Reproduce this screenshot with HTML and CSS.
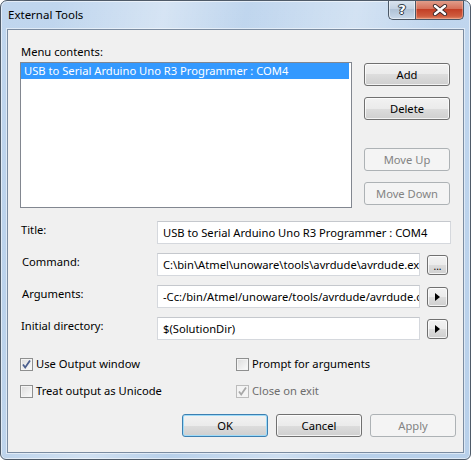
FILE: index.html
```html
<!DOCTYPE html>
<html>
<head>
<meta charset="utf-8">
<link rel="stylesheet" href="styles.css">
</head>
<body>
<div class="window">
  <div class="titlebar">
    <span class="title">External Tools</span>
    <div class="caption-btns">
      <div class="cap help"><span class="qmark">?</span></div>
      <div class="cap close">
        <svg width="16" height="12" viewBox="0 0 16 12">
          <path d="M3 2 L13 10 M13 2 L3 10" stroke="#3d2a2a" stroke-width="4.2" stroke-linecap="round"/>
          <path d="M3 2 L13 10 M13 2 L3 10" stroke="#fff" stroke-width="2.4" stroke-linecap="round"/>
        </svg>
      </div>
    </div>
  </div>
  <div class="client">
    <div class="top">
      <div class="list-col">
        <div class="label">Menu contents:</div>
        <div class="listbox">
          <div class="item sel">USB to Serial Arduino Uno R3 Programmer : COM4</div>
        </div>
      </div>
      <div class="side-btns">
        <div class="btn">Add</div>
        <div class="btn">Delete</div>
        <div class="btn disabled gap">Move Up</div>
        <div class="btn disabled">Move Down</div>
      </div>
    </div>
    <div class="form">
      <div class="row">
        <div class="flabel">Title:</div>
        <div class="field wide">USB to Serial Arduino Uno R3 Programmer : COM4</div>
      </div>
      <div class="row">
        <div class="flabel l2">Command:</div>
        <div class="field">C:\bin\Atmel\unoware\tools\avrdude\avrdude.exe</div>
        <div class="btn small"><span class="dots">...</span></div>
      </div>
      <div class="row">
        <div class="flabel l2">Arguments:</div>
        <div class="field">-Cc:/bin/Atmel/unoware/tools/avrdude/avrdude.conf</div>
        <div class="btn small"><svg width="5" height="8" viewBox="0 0 5 8"><path d="M0 0 L5 4 L0 8 Z" fill="#000"/></svg></div>
      </div>
      <div class="row">
        <div class="flabel">Initial directory:</div>
        <div class="field">$(SolutionDir)</div>
        <div class="btn small"><svg width="5" height="8" viewBox="0 0 5 8"><path d="M0 0 L5 4 L0 8 Z" fill="#000"/></svg></div>
      </div>
    </div>
    <div class="checks">
      <label class="chk"><span class="box"><svg width="11" height="11" viewBox="0 0 11 11"><path d="M2 5.5 L4.2 8.5 L9 1.5" fill="none" stroke="#4b5f8e" stroke-width="1.8"/></svg></span>Use Output window</label>
      <label class="chk"><span class="box"></span>Prompt for arguments</label>
      <label class="chk"><span class="box"></span>Treat output as Unicode</label>
      <label class="chk dis"><span class="box"><svg width="11" height="11" viewBox="0 0 11 11"><path d="M2 5.5 L4.2 8.5 L9 1.5" fill="none" stroke="#a8a8a8" stroke-width="1.8"/></svg></span>Close on exit</label>
    </div>
    <div class="actions">
      <div class="btn default">OK</div>
      <div class="btn">Cancel</div>
      <div class="btn disabled">Apply</div>
    </div>
  </div>
</div>
</body>
</html>
```

FILE: styles.css
```css
* { box-sizing: border-box; }
html, body { margin: 0; padding: 0; background: #fff; }
body {
  font-family: "Noto Sans", "Open Sans", sans-serif;
  font-size: 11.2px;
  color: #000;
}
.window {
  width: 471px;
  height: 460px;
  border: 1px solid #4f5b69;
  border-radius: 7px 7px 6px 6px;
  background:
    linear-gradient(100deg, rgba(255,255,255,0) 10%, rgba(255,255,255,0.35) 30%, rgba(255,255,255,0) 45%, rgba(255,255,255,0.3) 65%, rgba(255,255,255,0) 80%),
    linear-gradient(#c0d6ee, #b8d0ea);
  box-shadow: inset 0 0 0 1px rgba(255,255,255,0.55);
  display: flex;
  flex-direction: column;
  overflow: hidden;
}
.titlebar {
  height: 28px;
  display: flex;
  justify-content: space-between;
  align-items: flex-start;
  padding: 0 6px 0 7px;
  flex: none;
}
.title {
  margin-top: 6px;
  font-size: 11.5px;
  line-height: 16px;
  color: #000;
}
.caption-btns {
  display: flex;
  margin-top: -1px;
}
.cap {
  height: 20px;
  border: 1px solid #4a5766;
  border-top: none;
  display: flex;
  align-items: center;
  justify-content: center;
}
.help {
  width: 27px;
  border-right: none;
  border-radius: 0 0 0 5px;
  background: linear-gradient(#dbe5ef, #c3d2e2 45%, #b0c2d6 50%, #c9d9ea);
  box-shadow: inset 0 0 0 1px rgba(255,255,255,0.5);
}
.qmark {
  font-family: "DejaVu Sans", sans-serif;
  font-weight: bold;
  font-size: 13px;
  line-height: 13px;
  color: #fff;
  text-shadow: 0 0 1px #34414f, 0 0 1px #34414f, 0 0 1px #34414f, 1px 0 0 #34414f, -1px 0 0 #34414f, 0 1px 0 #34414f, 0 -1px 0 #34414f;
}
.close {
  width: 49px;
  border-radius: 0 0 5px 0;
  background: linear-gradient(#e2a391, #d6715a 45%, #c33f26 50%, #cf5c3e 85%, #e08a6a);
  box-shadow: inset 0 0 0 1px rgba(255,200,180,0.45);
}
.client {
  margin: 0 6px 6px 6px;
  flex: 1;
  background: #f0f0f0;
  border: 1px solid #7b8ca1;
  box-shadow: 0 0 0 1px rgba(255,255,255,0.5);
  padding: 14px 7px 0 12px;
  display: flex;
  flex-direction: column;
}
.top {
  display: flex;
  align-items: flex-start;
}
.label {
  line-height: 16px;
  padding-left: 1px;
}
.listbox {
  margin-top: 2px;
  width: 332px;
  height: 146px;
  border: 1px solid #828790;
  background: #fff;
  padding-top: 0;
}
.item {
  height: 16px;
  line-height: 16px;
  padding-left: 3px;
  margin-right: 2px;
  white-space: nowrap;
}
.item.sel {
  background: #3399ff;
  color: #fff;
}
.side-btns {
  margin-left: 12px;
  margin-top: 19px;
  display: flex;
  flex-direction: column;
  gap: 11px;
}
.side-btns .gap { margin-top: 17px; }
.btn {
  width: 86px;
  height: 23px;
  border: 1px solid #707070;
  border-radius: 3px;
  background: linear-gradient(#f2f2f2 0%, #ebebeb 50%, #dddddd 50%, #cfcfcf 100%);
  box-shadow: inset 0 0 0 1px rgba(255,255,255,0.75);
  display: flex;
  align-items: center;
  justify-content: center;
  line-height: 16px;
  color: #000;
}
.btn.disabled {
  border-color: #adb2b5;
  background: #f4f4f4;
  box-shadow: none;
  color: #838383;
}
.btn.default {
  border-color: #3c7fb1;
  box-shadow: inset 0 0 0 1px #9fdbf8;
}
.btn.small {
  width: 21px;
  height: 20px;
  margin-left: 7px;
  margin-top: 2px;
}
.dots {
  font-size: 10px;
  line-height: 10px;
  margin-top: 2px;
}
.form {
  margin-top: 13px;
  display: flex;
  flex-direction: column;
  gap: 9px;
}
.row {
  display: flex;
  align-items: flex-start;
  height: 23px;
}
.flabel {
  width: 137px;
  padding-left: 1px;
  padding-top: 1px;
  line-height: 16px;
}
.flabel.l2 { padding-left: 2px; }
.field {
  width: 263px;
  height: 23px;
  background: #fff;
  border: 1px solid #d5d8dd;
  border-top-color: #c5c8cd;
  padding: 0 0 0 5px;
  line-height: 21px;
  white-space: nowrap;
  overflow: hidden;
}
.field.wide { width: 294px; }
.checks {
  margin-top: 16px;
  display: grid;
  grid-template-columns: 216px auto;
  row-gap: 11px;
}
.chk {
  display: flex;
  align-items: center;
  height: 16px;
  line-height: 16px;
}
.box {
  width: 13px;
  height: 13px;
  border: 1px solid #8e8f8f;
  background: linear-gradient(135deg, #dcdcdc, #fbfbfb);
  box-shadow: inset 0 0 0 1px #f4f4f4;
  margin-right: 3px;
  display: flex;
  align-items: center;
  justify-content: center;
  flex: none;
}
.chk.dis { color: #6d6d6d; }
.chk.dis .box { border-color: #bcbcbc; background: #f4f4f4; }
.actions {
  margin-top: 15px;
  display: flex;
  justify-content: flex-end;
  gap: 8px;
}
```
